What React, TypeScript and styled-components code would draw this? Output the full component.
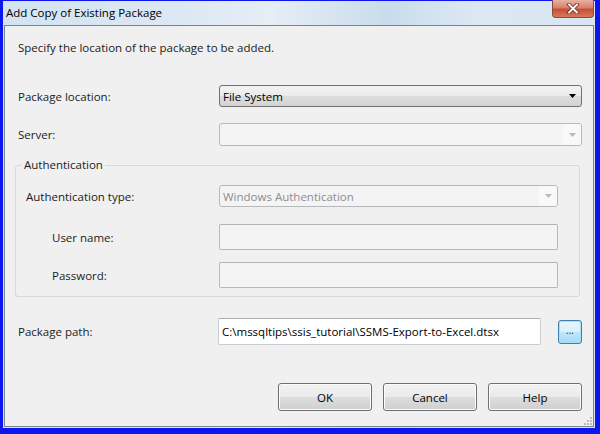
import styled, { createGlobalStyle } from 'styled-components';

const GlobalStyle = createGlobalStyle`
  html, body {
    margin: 0;
    padding: 0;
  }
  body {
    font-family: "Segoe UI", "Open Sans", "DejaVu Sans", sans-serif;
    font-size: 11.5px;
    color: #1b1b1b;
  }
`;

function Arrow({ disabled }: { disabled?: boolean }) {
  return (
    <svg width='7' height='4' viewBox='0 0 7 4'>
      <path d='M0 0 H7 L3.5 4 Z' fill={disabled ? '#b9b9b9' : '#000'} />
    </svg>
  );
}

function App() {
  return (
    <>
      <GlobalStyle />
      <Frame>
        <Window>
          <TitleBar>
            <Title>Add Copy of Existing Package</Title>
            <CloseButton>
              <svg width='14' height='11' viewBox='0 0 14 11'>
                <path
                  d='M3 1.5 L11 9.5 M11 1.5 L3 9.5'
                  stroke='#7a3328'
                  strokeWidth='3.6'
                  strokeLinecap='square'
                />
                <path
                  d='M3 1.5 L11 9.5 M11 1.5 L3 9.5'
                  stroke='#fff'
                  strokeWidth='1.8'
                  strokeLinecap='square'
                />
              </svg>
            </CloseButton>
          </TitleBar>
          <Client>
            <Intro>Specify the location of the package to be added.</Intro>

            <Row $top={29} $height={22}>
              <Label>Package location:</Label>
              <Combo>
                <span>File System</span>
                <Arrow />
              </Combo>
            </Row>

            <Row $top={16} $height={23}>
              <Label>Server:</Label>
              <Combo $disabled>
                <span />
                <ArrowCell>
                  <Arrow disabled />
                </ArrowCell>
              </Combo>
            </Row>

            <Group>
              <Legend>Authentication</Legend>
              <Row $top={12} $height={22} $labelWidth={193}>
                <Label>Authentication type:</Label>
                <Combo $disabled>
                  <span>Windows Authentication</span>
                  <ArrowCell>
                    <Arrow disabled />
                  </ArrowCell>
                </Combo>
              </Row>
              <Row $top={17} $height={26} $labelWidth={193}>
                <Label $indent={26}>User name:</Label>
                <TextBox $disabled />
              </Row>
              <Row $top={12} $height={26} $labelWidth={193}>
                <Label $indent={26}>Password:</Label>
                <TextBox $disabled />
              </Row>
            </Group>

            <PathRow>
              <Label>Package path:</Label>
              <TextBox>C:\mssqltips\ssis_tutorial\SSMS-Export-to-Excel.dtsx</TextBox>
              <BrowseButton>...</BrowseButton>
            </PathRow>

            <ButtonBar>
              <Button>OK</Button>
              <Button>Cancel</Button>
              <Button>Help</Button>
            </ButtonBar>

            <Grip>
              <svg width='8' height='8' viewBox='0 0 8 8'>
                {[
                  [6, 0],
                  [6, 3],
                  [3, 3],
                  [6, 6],
                  [3, 6],
                  [0, 6],
                ].map(([x, y]) => (
                  <rect key={`${x}-${y}`} x={x} y={y} width='2' height='2' fill='#b8bcc0' />
                ))}
              </svg>
            </Grip>
          </Client>
        </Window>
      </Frame>
    </>
  );
}

const Frame = styled.div`
  width: 600px;
  height: 434px;
  box-sizing: border-box;
  background: #0d16ee;
  padding: 1px 5px 6px 3px;
  display: flex;
  flex-direction: column;
`;

const Window = styled.div`
  flex: 1;
  display: flex;
  flex-direction: column;
  padding: 0 1px 1px 1px;
  background: linear-gradient(
    90deg,
    #d3e3f2 0%,
    #dce8f3 30%,
    #e6eef6 45%,
    #cadcec 65%,
    #dce9f4 80%,
    #d8e6f2 100%
  );
`;

const TitleBar = styled.div`
  height: 24px;
  display: flex;
  align-items: flex-start;
  justify-content: space-between;
`;

const Title = styled.div`
  padding: 3px 0 0 2px;
  font-size: 11.5px;
  line-height: 18px;
  color: #000;
`;

const CloseButton = styled.div`
  width: 40px;
  height: 17px;
  margin-top: -1px;
  display: flex;
  align-items: center;
  justify-content: center;
  border: 1px solid #8a4a40;
  border-top: none;
  border-radius: 0 0 4px 4px;
  background: linear-gradient(180deg, #eab0a2 0%, #d8806a 45%, #c44f36 55%, #d9785a 100%);
`;

const Client = styled.div`
  position: relative;
  flex: 1;
  display: flex;
  flex-direction: column;
  background: #f0f0f0;
  border: 1px solid #76858f;
  padding: 14px 11px 0 13px;
`;

const Intro = styled.div`
  line-height: 16px;
`;

const Row = styled.div<{ $top: number; $height: number; $labelWidth?: number }>`
  display: grid;
  grid-template-columns: ${(p) => p.$labelWidth ?? 201}px 1fr;
  align-items: stretch;
  margin-top: ${(p) => p.$top}px;
  height: ${(p) => p.$height}px;
`;

const Label = styled.div<{ $indent?: number }>`
  display: flex;
  align-items: center;
  padding-left: ${(p) => p.$indent ?? 0}px;
`;

const Combo = styled.div<{ $disabled?: boolean }>`
  display: flex;
  align-items: center;
  justify-content: space-between;
  box-sizing: border-box;
  padding: 0 ${(p) => (p.$disabled ? 0 : 5)}px 0 3px;
  border: 1px solid ${(p) => (p.$disabled ? '#b5b9bc' : '#707070')};
  border-radius: 3px;
  color: ${(p) => (p.$disabled ? '#8d8d8d' : '#000')};
  background: ${(p) =>
    p.$disabled
      ? '#f4f4f4'
      : 'linear-gradient(180deg, #f3f3f3 0%, #ebebeb 48%, #dddddd 52%, #d3d3d3 100%)'};
`;

const ArrowCell = styled.div`
  align-self: stretch;
  width: 18px;
  display: flex;
  align-items: center;
  justify-content: center;
  background: #f9f9f9;
  border-radius: 0 2px 2px 0;
`;

const TextBox = styled.div<{ $disabled?: boolean }>`
  display: flex;
  align-items: center;
  box-sizing: border-box;
  padding: 0 3px;
  border: 1px solid ${(p) => (p.$disabled ? '#b5b9bc' : '#c9cdd1')};
  border-top-color: ${(p) => (p.$disabled ? '#b0b4b8' : '#abadb3')};
  border-radius: 2px;
  background: ${(p) => (p.$disabled ? '#f4f4f4' : '#fff')};
  color: #000;
  white-space: nowrap;
  overflow: hidden;
`;

const Group = styled.fieldset`
  margin: 11px 2px 0 -3px;
  padding: 0 21px 8px 10px;
  border: 1px solid #d5dadd;
  border-radius: 3px;
  min-width: 0;
`;

const Legend = styled.legend`
  margin-left: -4px;
  padding: 0 2px;
  line-height: 16px;
`;

const PathRow = styled.div`
  display: grid;
  grid-template-columns: 200px 323px 1fr;
  align-items: center;
  margin-top: 21px;
  height: 27px;

  & > ${TextBox} {
    height: 27px;
  }
`;

const BrowseButton = styled.div`
  justify-self: end;
  width: 24px;
  height: 24px;
  box-sizing: border-box;
  display: flex;
  align-items: center;
  justify-content: center;
  padding-bottom: 4px;
  font-size: 10px;
  color: #333;
  border: 1px solid #3c7fb1;
  border-radius: 3px;
  box-shadow: inset 0 0 0 1px #a7e1f8;
  background: linear-gradient(180deg, #eaf6fd 0%, #d9f0fc 48%, #bee6fd 52%, #a7d9f5 100%);
`;

const ButtonBar = styled.div`
  display: flex;
  justify-content: flex-end;
  gap: 11px;
  margin-top: 38px;
`;

const Button = styled.div`
  width: 94px;
  height: 28px;
  box-sizing: border-box;
  display: flex;
  align-items: center;
  justify-content: center;
  color: #000;
  border: 1px solid #707070;
  border-radius: 3px;
  box-shadow: inset 0 0 0 1px #fcfcfc;
  background: linear-gradient(180deg, #f2f2f2 0%, #ebebeb 48%, #dddddd 52%, #cfcfcf 100%);
`;

const Grip = styled.div`
  position: absolute;
  right: 1px;
  bottom: 1px;
  line-height: 0;
`;

export default App;
